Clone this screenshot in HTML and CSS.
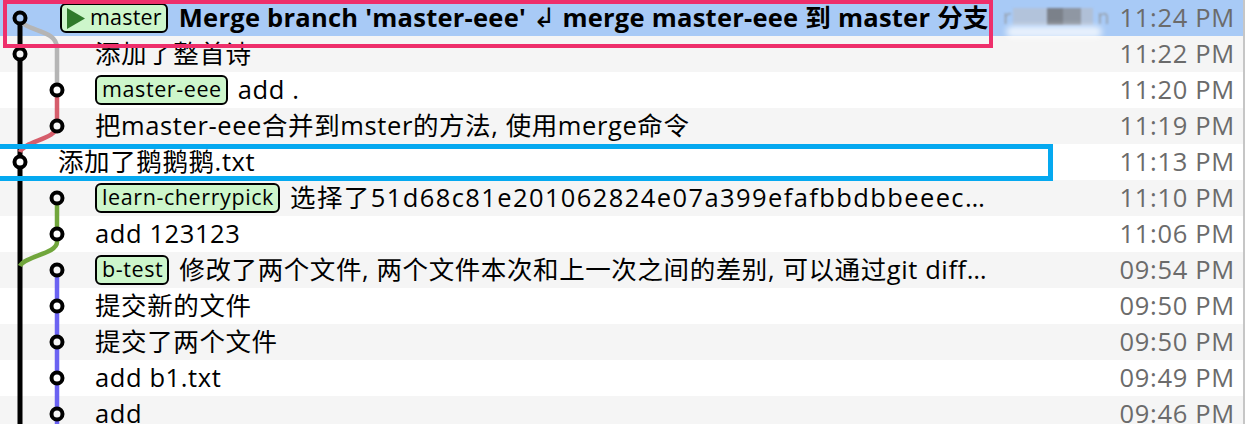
FILE: index.html
```html
<!DOCTYPE html>
<html lang="zh-CN">
<head>
<meta charset="utf-8">
<title>Git log</title>
<link rel="stylesheet" href="styles.css">
</head>
<body>
<div class="log">
  <div class="row sel l1">
    <div class="msg"><span class="tag head"><svg class="play" viewBox="0 0 18 21" width="18" height="21"><path d="M0 0L18 10.5L0 21Z"/></svg>master</span><span class="subj strong">Merge branch 'master-eee' <span class="nl">↲</span> merge master-eee 到 master 分支</span></div>
    <div class="author"><span class="who">r<i class="px p1"></i><i class="px p2"></i><i class="px p3"></i><i class="px p4"></i>n</span></div>
    <div class="time">11:24 PM</div>
  </div>
  <div class="row">
    <div class="msg"><span class="subj">添加了整首诗</span></div>
    <div class="author"></div>
    <div class="time">11:22 PM</div>
  </div>
  <div class="row">
    <div class="msg"><span class="tag">master-eee</span><span class="subj">add .</span></div>
    <div class="author"></div>
    <div class="time">11:20 PM</div>
  </div>
  <div class="row">
    <div class="msg"><span class="subj">把master-eee合并到mster的方法, 使用merge命令</span></div>
    <div class="author"></div>
    <div class="time">11:19 PM</div>
  </div>
  <div class="row l1">
    <div class="msg"><span class="subj">添加了鹅鹅鹅.txt</span></div>
    <div class="author"></div>
    <div class="time">11:13 PM</div>
  </div>
  <div class="row">
    <div class="msg"><span class="tag">learn-cherrypick</span><span class="subj hash">选择了51d68c81e201062824e07a399efafbbdbbeeec…</span></div>
    <div class="author"></div>
    <div class="time">11:10 PM</div>
  </div>
  <div class="row">
    <div class="msg"><span class="subj">add 123123</span></div>
    <div class="author"></div>
    <div class="time">11:06 PM</div>
  </div>
  <div class="row">
    <div class="msg"><span class="tag">b-test</span><span class="subj">修改了两个文件, 两个文件本次和上一次之间的差别, 可以通过git diff…</span></div>
    <div class="author"></div>
    <div class="time">09:54 PM</div>
  </div>
  <div class="row">
    <div class="msg"><span class="subj">提交新的文件</span></div>
    <div class="author"></div>
    <div class="time">09:50 PM</div>
  </div>
  <div class="row">
    <div class="msg"><span class="subj">提交了两个文件</span></div>
    <div class="author"></div>
    <div class="time">09:50 PM</div>
  </div>
  <div class="row">
    <div class="msg"><span class="subj">add b1.txt</span></div>
    <div class="author"></div>
    <div class="time">09:49 PM</div>
  </div>
  <div class="row">
    <div class="msg"><span class="subj">add</span></div>
    <div class="author"></div>
    <div class="time">09:46 PM</div>
  </div>

  <svg class="graph" width="80" height="432" viewBox="0 0 80 432">
    <path class="ln black" d="M20 18V432"/>
    <path class="ln grey" d="M20 18C22 32 57 28 57 48V90"/>
    <path class="ln red" d="M57 90V126C57 139 24 141 20 152"/>
    <path class="ln green" d="M57 198V242C57 254 25 256 20 266"/>
    <path class="ln blue" d="M57 270V432"/>
    <circle class="node on-sel" cx="20" cy="18" r="5.5"/>
    <circle class="node on-grey" cx="20" cy="54" r="5.5"/>
    <circle class="node" cx="57" cy="90" r="5.5"/>
    <circle class="node on-grey" cx="57" cy="126" r="5.5"/>
    <circle class="node" cx="20" cy="162" r="5.5"/>
    <circle class="node on-grey" cx="57" cy="198" r="5.5"/>
    <circle class="node" cx="57" cy="234" r="5.5"/>
    <circle class="node on-grey" cx="57" cy="270" r="5.5"/>
    <circle class="node" cx="57" cy="306" r="5.5"/>
    <circle class="node on-grey" cx="57" cy="342" r="5.5"/>
    <circle class="node" cx="57" cy="378" r="5.5"/>
    <circle class="node on-grey" cx="57" cy="414" r="5.5"/>
  </svg>

  <div class="mark mark-pink"></div>
  <div class="mark mark-cyan"></div>
</div>
</body>
</html>
```
FILE: styles.css
```css
* { box-sizing: border-box; }
html, body { margin: 0; background: #fff; }
body {
  font-family: "Open Sans", "Noto Sans CJK SC", sans-serif;
  font-size: 25.5px;
  color: #000;
}
.log {
  position: relative;
  width: 1245px;
  height: 424px;
  overflow: hidden;
  border-right: 2px solid #c6c6c6;
}
.row {
  display: grid;
  grid-template-columns: 992px 118px 1fr;
  align-items: center;
  height: 36px;
  background: #fff;
}
.row:nth-child(even) { background: #f5f5f5; }
.row.sel { background: #a8caf6; }

.msg {
  display: flex;
  align-items: center;
  gap: 10px;
  height: 36px;
  padding-left: 95px;
  min-width: 0;
  overflow: hidden;
  white-space: nowrap;
}
.l1 .msg { padding-left: 58px; }
.sel .msg { padding-left: 60px; gap: 11px; }

.subj {
  line-height: 32px;
  padding-bottom: 2px;
  letter-spacing: 0.6px;
  overflow: hidden;
  text-overflow: ellipsis;
  min-width: 0;
}
.subj.hash { letter-spacing: 1.4px; }
.strong { font-weight: 700; letter-spacing: 0.25px; }
.nl {
  font-family: "DejaVu Sans", sans-serif;
  font-weight: 400;
  font-size: 27px;
  letter-spacing: 0;
}

.tag {
  flex: none;
  display: inline-flex;
  align-items: center;
  gap: 5px;
  height: 30px;
  padding: 0 4px 3px 5px;
  border: 2px solid #000;
  border-radius: 6px;
  background: #cdf6cb;
  font-size: 21.5px;
  letter-spacing: 0.6px;
  line-height: 24px;
}
.tag.head { padding-left: 5px; letter-spacing: 0.2px; }
.play { display: block; fill: #2f7a2b; margin-top: 3px; }

.author {
  position: relative;
  display: flex;
  align-items: center;
  height: 36px;
  padding-left: 11px;
}
.who {
  display: inline-flex;
  align-items: center;
  font-size: 20px;
  color: #97a1ae;
  filter: blur(1.2px);
  padding-bottom: 4px;
}
.px { display: inline-block; height: 17px; }
.p1 { width: 34px; background: #b2c3db; margin-left: 2px; }
.p2 { width: 16px; background: #7b818a; }
.p3 { width: 18px; background: #8f97a3; }
.p4 { width: 12px; background: #b0c0d7; margin-right: 4px; }
.sel .author::after {
  content: "";
  position: absolute;
  left: 14px;
  top: 26px;
  width: 96px;
  height: 12px;
  border-radius: 6px;
  background: rgba(255, 255, 255, 0.75);
  filter: blur(3px);
}

.time {
  text-align: right;
  padding-right: 8px;
  padding-bottom: 2px;
  line-height: 32px;
  letter-spacing: 0.7px;
  color: #6b6b6b;
  white-space: nowrap;
}

.graph { position: absolute; left: 0; top: 0; }
.ln { fill: none; stroke-width: 4.5; }
.ln.black { stroke: #000; stroke-width: 5; }
.ln.grey { stroke: #b5b5b5; }
.ln.red { stroke: #d65e6c; }
.ln.green { stroke: #71a63c; }
.ln.blue { stroke: #6b63f2; }
.node { fill: #fff; stroke: #000; stroke-width: 4; }
.node.on-grey { fill: #f5f5f5; }
.node.on-sel { fill: #a8caf6; }

.mark {
  position: absolute;
  pointer-events: none;
}
.mark-pink {
  left: 3px;
  top: 0;
  width: 990px;
  height: 48px;
  border: 4px solid #ee2f6b;
}
.mark-cyan {
  left: -10px;
  top: 144px;
  width: 1063px;
  height: 37px;
  border: 5px solid #05a9f0;
}
```
